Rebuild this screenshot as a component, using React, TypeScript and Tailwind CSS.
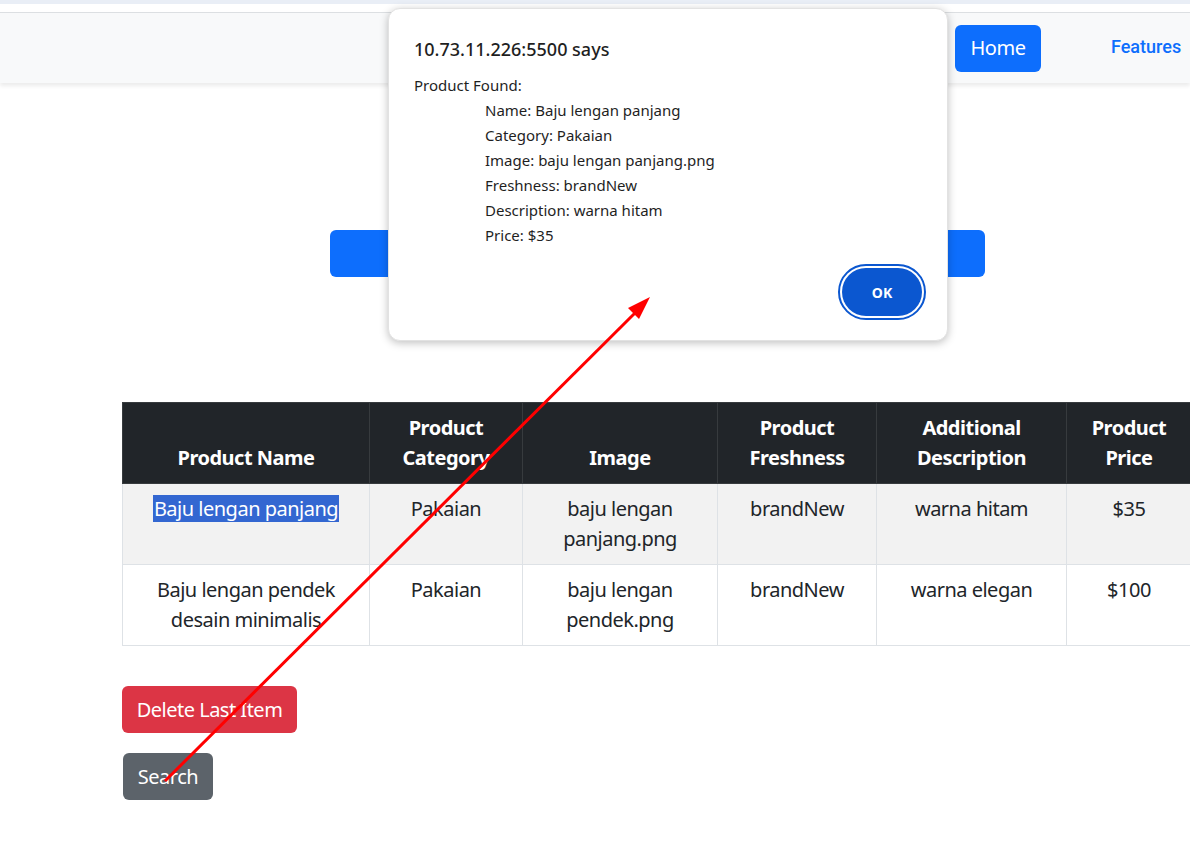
import React from "react";

const headers = [
  ["Product Name"],
  ["Product", "Category"],
  ["Image"],
  ["Product", "Freshness"],
  ["Additional", "Description"],
  ["Product", "Price"],
];

const rows = [
  ["Baju lengan panjang", "Pakaian", "baju lengan panjang.png", "brandNew", "warna hitam", "$35"],
  ["Baju lengan pendek desain minimalis", "Pakaian", "baju lengan pendek.png", "brandNew", "warna elegan", "$100"],
];

const details = [
  "Name: Baju lengan panjang",
  "Category: Pakaian",
  "Image: baju lengan panjang.png",
  "Freshness: brandNew",
  "Description: warna hitam",
  "Price: $35",
];

export default function App() {
  return (
    <div className="relative h-[854px] w-full overflow-hidden bg-white font-['Noto_Sans',sans-serif] text-[#212529]">
      <div className="h-[4px] bg-[#e9eef6]" />
      <div className="mt-[8px] flex h-[71px] items-center border-t border-[#dcdfe2] bg-[#f8f9fa] shadow-[0_3px_4px_rgba(0,0,0,0.08)]">
        <div className="ml-[955px] flex h-[47px] w-[86px] items-center justify-center rounded-[6px] bg-[#0d6efd] text-[20px] tracking-[-0.5px] text-white">
          Home
        </div>
        <div className="ml-[70px] -mt-[3px] font-['Roboto',sans-serif] text-[18px] font-medium text-[#0d6efd]">
          Features
        </div>
      </div>

      <div className="ml-[330px] mt-[147px] h-[47px] w-[655px] rounded-[6px] bg-[#0d6efd]" />

      <table className="ml-[122px] mt-[125px] w-[1070px] table-fixed border-collapse text-center text-[20px] leading-[30px] tracking-[-0.5px]">
        <colgroup>
          <col className="w-[247px]" />
          <col className="w-[153px]" />
          <col className="w-[195px]" />
          <col className="w-[159px]" />
          <col className="w-[190px]" />
          <col />
        </colgroup>
        <thead>
          <tr className="bg-[#212529] text-white">
            {headers.map((h, i) => (
              <th
                key={i}
                className="h-[81px] border border-[#373b3e] px-[10px] pb-[10px] align-bottom font-bold"
              >
                {h.map((line) => (
                  <div key={line}>{line}</div>
                ))}
              </th>
            ))}
          </tr>
        </thead>
        <tbody>
          {rows.map((r, ri) => (
            <tr key={ri} className={ri === 0 ? "bg-[#f2f2f2]" : "bg-white"}>
              {r.map((c, ci) => (
                <td
                  key={ci}
                  className="h-[80px] border border-[#dee2e6] px-[10px] py-[10px] align-top"
                >
                  {ri === 0 && ci === 0 ? (
                    <span className="bg-[#3367d1] px-[1px] text-white">{c}</span>
                  ) : (
                    c
                  )}
                </td>
              ))}
            </tr>
          ))}
        </tbody>
      </table>

      <div className="ml-[122px] mt-[40px] flex flex-col items-start gap-[20px] tracking-[-0.5px]">
        <button className="h-[47px] w-[175px] rounded-[6px] bg-[#dc3545] text-[20px] text-white">
          Delete Last Item
        </button>
        <button className="ml-[1px] h-[47px] w-[90px] rounded-[6px] bg-[#5c636a] text-[20px] text-white">
          Search
        </button>
      </div>

      {/* alert dialog */}
      <div className="absolute left-[388px] top-[8px] h-[333px] w-[560px] rounded-[12px] border border-[#e2e2e2] bg-white shadow-[0_2px_8px_rgba(0,0,0,0.25)]">
        <div className="ml-[25px] mt-[28px] text-[18px] font-medium leading-[24px] text-[#1f1f1f]">
          10.73.11.226:5500 says
        </div>
        <div className="ml-[25px] mt-[12px] text-[15px] leading-[25px] text-[#1f1f1f]">
          <div>Product Found:</div>
          {details.map((d) => (
            <div key={d} className="ml-[71px]">
              {d}
            </div>
          ))}
        </div>
        <div className="absolute right-[21px] top-[255px] rounded-full border-[2px] border-[#0b57d0] p-[2px]">
          <div className="flex h-[48px] w-[80px] items-center justify-center rounded-full bg-[#0b57d0] text-[14px] font-bold text-white">
            OK
          </div>
        </div>
      </div>

      {/* red arrow annotation */}
      <svg className="pointer-events-none absolute left-0 top-0" width="1190" height="854">
        <line x1="165" y1="781" x2="638" y2="310" stroke="#ff0000" strokeWidth="3" />
        <polygon points="650,297 628,308 639,319" fill="#ff0000" />
      </svg>
    </div>
  );
}
